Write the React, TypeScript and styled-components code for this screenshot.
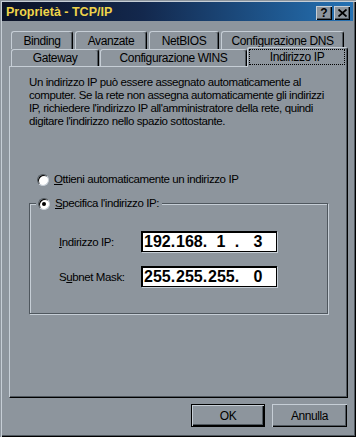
import React from 'react';
import styled, { createGlobalStyle } from 'styled-components';

const FACE = '#8d959d';
const LIGHT = '#c6ced6';
const SHADOW = '#4f575e';
const UI_FONT = '"Liberation Sans", Arial, sans-serif';

const Global = createGlobalStyle`
  html, body { margin: 0; padding: 0; background: ${FACE}; }
  * { box-sizing: border-box; }
`;

const Window = styled.div`
  width: 356px;
  height: 437px;
  background: ${FACE};
  padding: 2px 3px 3px 2px;
  box-shadow: inset 1px 1px 0 ${FACE}, inset 2px 2px 0 ${LIGHT}, inset -1px -1px 0 #000, inset -2px -2px 0 ${SHADOW};
  display: flex;
  flex-direction: column;
  font-family: ${UI_FONT};
  font-size: 11.5px;
  letter-spacing: -0.4px;
  color: #000;
`;

const TitleBar = styled.div`
  height: 19px;
  display: flex;
  align-items: center;
  justify-content: space-between;
  padding: 0 3px 0 4px;
  background: linear-gradient(90deg, #0b1226 0%, #13284d 40%, #2572b4 100%);
`;

const TitleText = styled.span`
  font-weight: bold;
  font-size: 12.5px;
  letter-spacing: 0;
  color: #efd44a;
`;

const CaptionButtons = styled.div`
  display: flex;
  gap: 2px;
  margin-top: 2px;
`;

const CaptionButton = styled.div`
  width: 16px;
  height: 14px;
  background: ${FACE};
  box-shadow: inset 1px 1px 0 ${LIGHT}, inset -1px -1px 0 #000, inset -2px -2px 0 ${SHADOW};
  display: flex;
  align-items: center;
  justify-content: center;
  font-weight: bold;
  font-size: 12px;
  letter-spacing: 0;
  line-height: 1;
  color: #000;
`;

const Body = styled.div`
  flex: 1;
  display: flex;
  flex-direction: column;
  padding: 10px 5px 0 7px;
`;

const TabStrip = styled.div`
  display: flex;
  flex-direction: column;
`;

const TabRow = styled.div<{ $gap: number }>`
  display: flex;
  gap: ${(p) => p.$gap}px;
  padding-left: 2px;
`;

const Tab = styled.div<{ $w: number; $h: number }>`
  width: ${(p) => p.$w}px;
  height: ${(p) => p.$h}px;
  background: ${FACE};
  border-top: 1px solid ${LIGHT};
  border-left: 1px solid ${LIGHT};
  border-right: 1px solid #000;
  border-radius: 3px 3px 0 0;
  box-shadow: inset -1px 0 0 ${SHADOW};
  display: flex;
  align-items: center;
  justify-content: center;
  white-space: nowrap;
  font-size: 12px;
`;

const ActiveTab = styled(Tab)`
  position: relative;
  z-index: 1;
  margin-top: -2px;
  margin-bottom: -1px;
  margin-left: -1px;
  padding: 1px 2px 2px 1px;
`;

const FocusLabel = styled.div`
  flex: 1;
  height: 100%;
  outline: 1px dotted #000;
  outline-offset: -1px;
  display: flex;
  align-items: center;
  justify-content: center;
`;

const Panel = styled.div`
  height: 332px;
  border-top: 1px solid ${LIGHT};
  border-left: 1px solid ${LIGHT};
  border-right: 1px solid #000;
  border-bottom: 1px solid #000;
  box-shadow: inset -1px -1px 0 ${SHADOW};
  padding: 9px 10px 0 19px;
  display: flex;
  flex-direction: column;
`;

const Intro = styled.p`
  margin: 0;
  line-height: 13px;
  white-space: nowrap;
`;

const RadioRow = styled.div`
  display: flex;
  align-items: center;
  gap: 5px;
  height: 13px;
  line-height: 13px;
`;

const FirstRadio = styled(RadioRow)`
  margin-top: 45px;
  padding-left: 8px;
`;

const Radio = styled.span<{ $checked?: boolean }>`
  width: 12px;
  height: 12px;
  border-radius: 50%;
  background: #fff;
  border: 1px solid;
  border-color: ${SHADOW} ${LIGHT} ${LIGHT} ${SHADOW};
  box-shadow: inset 1px 1px 0 #000;
  display: flex;
  align-items: center;
  justify-content: center;
  flex: none;
  &::after {
    content: '';
    width: 4px;
    height: 4px;
    border-radius: 50%;
    background: #000;
    display: ${(p) => (p.$checked ? 'block' : 'none')};
  }
`;

const Mn = styled.span`
  text-decoration: underline;
  text-underline-offset: 1px;
`;

const Group = styled.div`
  width: 299px;
  margin-top: 17px;
  border: 1px solid ${SHADOW};
  box-shadow: inset 1px 1px 0 ${LIGHT}, 1px 1px 0 ${LIGHT};
  padding: 0 0 26px 29px;
  display: flex;
  flex-direction: column;
`;

const Legend = styled(RadioRow)`
  align-self: flex-start;
  margin: -7px 0 0 -23px;
  padding: 0 3px 0 2px;
  background: ${FACE};
`;

const FieldRow = styled.div<{ $top: number }>`
  display: flex;
  align-items: center;
  margin-top: ${(p) => p.$top}px;
`;

const FieldLabel = styled.span`
  width: 82px;
`;

const IpBox = styled.div`
  width: 136px;
  height: 21px;
  background: #fff;
  border-top: 2px solid #000;
  border-left: 2px solid #000;
  border-right: 1px solid #000;
  border-bottom: 1px solid #000;
  box-shadow: 1px 1px 0 ${LIGHT};
  display: flex;
  align-items: center;
  padding-left: 1px;
  font-weight: bold;
  font-size: 16px;
  letter-spacing: 0;
  line-height: 1;
`;

const Octet = styled.span<{ $last?: boolean }>`
  width: ${(p) => (p.$last ? 'auto' : '26px')};
  flex: ${(p) => (p.$last ? 1 : 'none')};
  text-align: center;
`;

const Dot = styled.span`
  width: 6px;
  text-align: center;
`;

const ButtonRow = styled.div`
  display: flex;
  justify-content: flex-end;
  gap: 7px;
  margin-top: 6px;
  padding-right: 1px;
`;

const Button = styled.div<{ $w: number; $default?: boolean }>`
  width: ${(p) => p.$w}px;
  height: 23px;
  background: ${FACE};
  display: flex;
  align-items: center;
  justify-content: center;
  font-size: 12px;
  border: ${(p) => (p.$default ? '1px solid #000' : 'none')};
  box-shadow: inset 1px 1px 0 ${LIGHT}, inset -1px -1px 0 #000, inset -2px -2px 0 ${SHADOW};
`;

function IpAddress({ parts }: { parts: string[] }) {
  return (
    <IpBox>
      <Octet>{parts[0]}</Octet>
      <Dot>.</Dot>
      <Octet>{parts[1]}</Octet>
      <Dot>.</Dot>
      <Octet>{parts[2]}</Octet>
      <Dot>.</Dot>
      <Octet $last>{parts[3]}</Octet>
    </IpBox>
  );
}

export default function App() {
  return (
    <>
      <Global />
      <Window>
        <TitleBar>
          <TitleText>Proprietà - TCP/IP</TitleText>
          <CaptionButtons>
            <CaptionButton>?</CaptionButton>
            <CaptionButton>
              <svg width="9" height="8" viewBox="0 0 9 8">
                <path d="M0.5 0.5 L8.5 7.5 M8.5 0.5 L0.5 7.5" stroke="#000" strokeWidth="1.8" />
              </svg>
            </CaptionButton>
          </CaptionButtons>
        </TitleBar>
        <Body>
          <TabStrip>
            <TabRow $gap={2}>
              <Tab $w={62} $h={18}>Binding</Tab>
              <Tab $w={72} $h={18}>Avanzate</Tab>
              <Tab $w={70} $h={18}>NetBIOS</Tab>
              <Tab $w={123} $h={18}>Configurazione DNS</Tab>
            </TabRow>
            <TabRow $gap={1}>
              <Tab $w={88} $h={17}>Gateway</Tab>
              <Tab $w={147} $h={17}>Configurazione WINS</Tab>
              <ActiveTab $w={101} $h={20}>
                <FocusLabel>Indirizzo IP</FocusLabel>
              </ActiveTab>
            </TabRow>
          </TabStrip>
          <Panel>
            <Intro>
              Un indirizzo IP può essere assegnato automaticamente al
              <br />
              computer. Se la rete non assegna automaticamente gli indirizzi
              <br />
              IP, richiedere l'indirizzo IP all'amministratore della rete, quindi
              <br />
              digitare l'indirizzo nello spazio sottostante.
            </Intro>
            <FirstRadio>
              <Radio />
              <span>
                <Mn>O</Mn>ttieni automaticamente un indirizzo IP
              </span>
            </FirstRadio>
            <Group>
              <Legend>
                <Radio $checked />
                <span>
                  <Mn>S</Mn>pecifica l'indirizzo IP:
                </span>
              </Legend>
              <FieldRow $top={21}>
                <FieldLabel>
                  <Mn>I</Mn>ndirizzo IP:
                </FieldLabel>
                <IpAddress parts={['192', '168', '1', '3']} />
              </FieldRow>
              <FieldRow $top={14}>
                <FieldLabel>
                  S<Mn>u</Mn>bnet Mask:
                </FieldLabel>
                <IpAddress parts={['255', '255', '255', '0']} />
              </FieldRow>
            </Group>
          </Panel>
          <ButtonRow>
            <Button $w={74} $default>OK</Button>
            <Button $w={75}>Annulla</Button>
          </ButtonRow>
        </Body>
      </Window>
    </>
  );
}
